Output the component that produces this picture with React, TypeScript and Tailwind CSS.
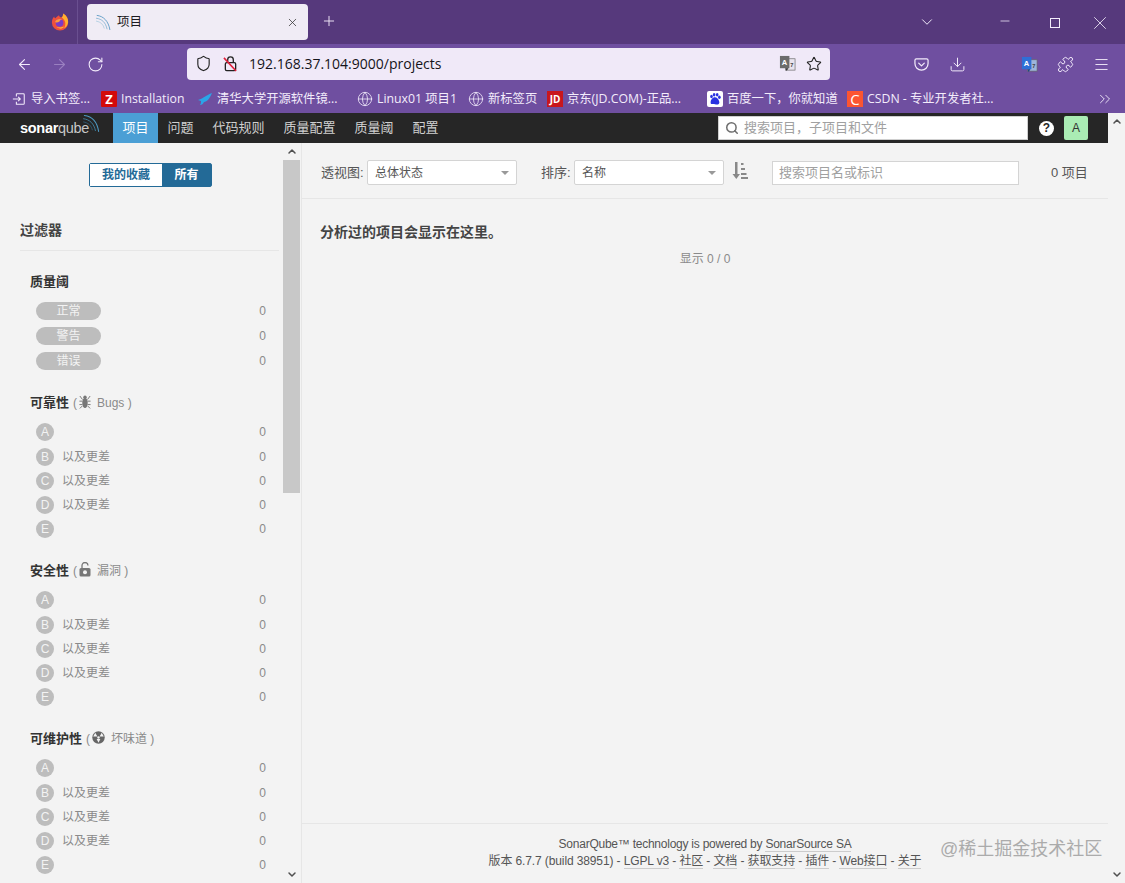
import React from "react";
import {
  ArrowLeft, ArrowRight, RotateCw, Shield, Star, Download, Puzzle, Menu, ChevronDown, ChevronUp,
  Minus, X, Plus, Globe, Search, ChevronsRight,
} from "lucide-react";

const FONT = "font-['Liberation_Sans','Noto_Sans_CJK_SC',sans-serif]";

function SonarWave({ className, colors }: { className: string; colors: string[] }) {
  return (
    <svg viewBox="0 0 24 24" className={className} fill="none" strokeLinecap="round">
      <path d="M3 2c9 1 16 8 18 20" stroke={colors[0]} strokeWidth="1.3" />
      <path d="M2 6c8 1 13 6 15 15" stroke={colors[1]} strokeWidth="1.2" />
      <path d="M2 10c6 1 10 5 11 10" stroke={colors[2]} strokeWidth="1.1" />
    </svg>
  );
}

function Firefox() {
  return (
    <svg viewBox="0 0 20 20" className="w-[18px] h-[19px]">
      <path d="M13.5 1c4 2.5 6 6 5.5 10a9 9 0 0 1-18 0c0-2.5 1-5 2.5-6.5 0 1 .5 1.5 1.5 2C6 4.5 8 4 9 3c0 1.500 1 2 2.500 2.500C13 5 13.500 3 13.500 1z" fill="#f0503c" />
      <path d="M13.500 1c4 2.500 6 6 5.500 10-.5 3-2 5-4.500 6.500 2-3 2-7 0-9.500-1-1.500-2-2-3-2.500C13 5 13.500 3 13.500 1z" fill="#ffb02e" />
      <circle cx="9.500" cy="11.500" r="4.300" fill="#7a3bc8" />
      <path d="M4.500 10.500c1-3 5-4.500 8-2.500-2 0-3 1-3 2-2 1.500-4 1.500-5 .5z" fill="#ff9a3d" />
      <path d="M6 16.500c3 2 7 1.500 9-1-1 .5-5 1.500-9 1z" fill="#ffc83d" />
    </svg>
  );
}

function LockOff() {
  return (
    <svg viewBox="0 0 16 18" className="w-[15px] h-[17px]" fill="none">
      <path d="M5 8V5a3 3 0 0 1 6 0v3" stroke="#222" strokeWidth="1.4" />
      <rect x="2.500" y="8" width="11" height="8.500" rx="1.500" stroke="#222" strokeWidth="1.400" />
      <path d="M1 3l13 14" stroke="#e0203c" strokeWidth="1.700" />
    </svg>
  );
}

function Translate({ blue }: { blue?: boolean }) {
  return (
    <svg viewBox="0 0 18 18" className="w-[17px] h-[17px]">
      <rect x="7" y="4" width="10" height="12" fill={blue ? "#9db5dc" : "#e8e3ee"} stroke="#666" strokeWidth="0.7" />
      <rect x="1" y="1" width="10" height="13" fill={blue ? "#2f6fd6" : "#6b6b6b"} />
      <path d="M7 14l1 3 2-3z" fill={blue ? "#1b3f80" : "#333"} />
      <text x="3" y="10.500" fontSize="8" fontWeight="700" fill="#fff" fontFamily="Liberation Sans">A</text>
      <text x="12" y="13" fontSize="6" fontWeight="700" fill="#444" fontFamily="Liberation Sans">7</text>
    </svg>
  );
}

function Pocket() {
  return (
    <svg viewBox="0 0 16 16" className="w-[15px] h-[15px]" fill="none" stroke="#f3ecfb" strokeWidth="1.300" strokeLinecap="round" strokeLinejoin="round">
      <path d="M2.500 2h11A1.500 1.500 0 0 1 15 3.500V7a7 7 0 0 1-14 0V3.500A1.500 1.500 0 0 1 2.500 2z" />
      <path d="M5 6.500l3 3 3-3" />
    </svg>
  );
}

function ImportIcon() {
  return (
    <svg viewBox="0 0 16 16" className="w-[14px] h-[14px]" fill="none" stroke="#f3ecfb" strokeWidth="1.200">
      <path d="M5 2h8a1 1 0 0 1 1 1v10a1 1 0 0 1-1 1H5V11" />
      <path d="M5 5V2" />
      <path d="M1 8h8M7 5.500L9.500 8 7 10.500" />
    </svg>
  );
}

function Bookmark({ icon, label, w }: { icon: React.ReactNode; label: string; w: string }) {
  return (
    <div className={`flex items-center gap-[4px] shrink-0 ${w}`}>
      <span className="w-[16px] h-[16px] flex items-center justify-center shrink-0">{icon}</span>
      <span className="pt-[2px] font-['Open_Sans','Noto_Sans_CJK_SC',sans-serif] text-[12.3px] text-[#f3ecfb] whitespace-nowrap">{label}</span>
    </div>
  );
}

function BrowserChrome() {
  return (
    <div className="shrink-0 font-['Open_Sans','Noto_Sans_CJK_SC',sans-serif]">
      <div className="h-[44px] bg-[#56397c] flex items-start">
        <div className="w-[78px] h-[44px] border-r border-[#6a4f90] flex items-center justify-end pr-[8px] pb-[2px]">
          <Firefox />
        </div>
        <div className="ml-[9px] mt-[4px] w-[221px] h-[36px] bg-[#f0ecf5] rounded-[4px] flex items-center pl-[8px] pr-[9px]">
          <SonarWave className="w-[17px] h-[17px]" colors={["#5f9cc5", "#86b4d2", "#a9cadf"]} />
          <span className="ml-[5px] text-[12.5px] text-[#1c1b22]">项目</span>
          <X className="ml-auto w-[13px] h-[13px] text-[#333]" strokeWidth={1.4} />
        </div>
        <Plus className="ml-[13px] mt-[13px] w-[16px] h-[16px] text-[#f3ecfb]" strokeWidth={1.4} />
        <ChevronDown className="ml-[581px] mt-[13px] w-[18px] h-[18px] text-[#f3ecfb]" strokeWidth={1.3} />
        <Minus className="ml-[62px] mt-[14px] w-[14px] h-[14px] text-[#f3ecfb]" strokeWidth={1.3} />
        <span className="ml-[38px] mt-[18px] w-[10px] h-[10px] border border-[#f3ecfb]" />
        <X className="ml-[29px] mt-[12px] w-[22px] h-[22px] text-[#f3ecfb]" strokeWidth={0.9} />
      </div>
      <div className="h-[40px] bg-[#6f4fa0] flex items-center">
        <ArrowLeft className="ml-[16px] w-[17px] h-[17px] text-[#f3ecfb]" strokeWidth={1.5} />
        <ArrowRight className="ml-[18px] w-[17px] h-[17px] text-[#9a80c0]" strokeWidth={1.5} />
        <RotateCw className="ml-[19px] w-[17px] h-[17px] text-[#f3ecfb]" strokeWidth={1.5} />
        <div className="ml-[83px] mt-[-1px] w-[643px] h-[32px] bg-[#f0e9f8] rounded-[4px] flex items-center pl-[8px] pr-[8px]">
          <Shield className="w-[17px] h-[17px] text-[#222]" strokeWidth={1.6} />
          <span className="ml-[11px]"><LockOff /></span>
          <span className="ml-[11px] text-[14px] text-[#15141a]">192.168.37.104:9000/projects</span>
          <span className="ml-auto"><Translate /></span>
          <Star className="ml-[10px] w-[16px] h-[16px] text-[#222]" strokeWidth={1.6} />
        </div>
        <span className="ml-[84px]"><Pocket /></span>
        <Download className="ml-[20px] w-[17px] h-[17px] text-[#f3ecfb]" strokeWidth={1.4} />
        <span className="ml-[55px]"><Translate blue /></span>
        <Puzzle className="ml-[19px] w-[17px] h-[17px] text-[#f3ecfb]" strokeWidth={1.4} />
        <Menu className="ml-[19px] w-[17px] h-[17px] text-[#f3ecfb]" strokeWidth={1.3} />
      </div>
      <div className="h-[29px] bg-[#6f4fa0] flex items-center pl-[11px]">
        <Bookmark w="w-[90px]" icon={<ImportIcon />} label="导入书签..." />
        <Bookmark w="w-[96px]" icon={<span className="w-[16px] h-[16px] bg-[#d30a0a] text-white text-[13px] font-bold leading-[16px] text-center rounded-[1px]">Z</span>} label="Installation" />
        <Bookmark w="w-[160px]" icon={<svg viewBox="0 0 16 16" className="w-[16px] h-[16px]"><path d="M1 9c4-1 7-4 14-7-2 5-5 9-8 9-1 2-2 3-4 3 1-1 1-3 1-4z" fill="#2aa5e8" /></svg>} label="清华大学开源软件镜..." />
        <Bookmark w="w-[111px]" icon={<Globe className="w-[16px] h-[16px] text-[#f3ecfb]" strokeWidth={1.2} />} label="Linux01 项目1" />
        <Bookmark w="w-[79px]" icon={<Globe className="w-[16px] h-[16px] text-[#f3ecfb]" strokeWidth={1.2} />} label="新标签页" />
        <Bookmark w="w-[160px]" icon={<span className="w-[16px] h-[16px] bg-[#c8161d] text-white text-[10px] font-bold leading-[16px] text-center">JD</span>} label="京东(JD.COM)-正品..." />
        <Bookmark w="w-[140px]" icon={<span className="w-[16px] h-[16px] bg-white rounded-[2px] flex items-center justify-center"><svg viewBox="0 0 16 16" className="w-[14px] h-[14px]" fill="#2932e1"><ellipse cx="4" cy="5" rx="1.500" ry="2" /><ellipse cx="7" cy="3" rx="1.500" ry="2" /><ellipse cx="10.500" cy="3" rx="1.500" ry="2" /><ellipse cx="13" cy="6" rx="1.500" ry="2" /><path d="M8 6c3 0 5 4 5 6s-2 3-5 2-5 1-5-2 2-6 5-6z" /></svg></span>} label="百度一下，你就知道" />
        <Bookmark w="w-[249px]" icon={<span className="w-[16px] h-[16px] bg-[#fc5531] text-white text-[15px] leading-[16px] text-center">C</span>} label="CSDN - 专业开发者社..." />
        <ChevronsRight className="w-[18px] h-[18px] text-[#f3ecfb]" strokeWidth={1.2} />
      </div>
    </div>
  );
}

function SonarNav() {
  const items = ["问题", "代码规则", "质量配置", "质量阈", "配置"];
  return (
    <div className="h-[30px] bg-[#262626] flex items-stretch shrink-0">
      <div className="w-[113px] flex items-center pl-[20px]">
        <span className="text-[14.5px] font-bold text-white tracking-[-0.3px] leading-none">sonar</span>
        <span className="text-[14.5px] text-[#c8c8c8] tracking-[-0.3px] leading-none">qube</span>
        <SonarWave className="w-[19px] h-[19px] -ml-[7px] -mt-[9px]" colors={["#4f9bc4", "#3f7f9f", "#2f5f78"]} />
      </div>
      <div className="w-[45px] bg-[#4b9fd5] text-white text-[13px] flex items-center justify-center">项目</div>
      {items.map((t) => (
        <div key={t} className="px-[9.5px] text-[#d0d0d0] text-[13px] flex items-center">{t}</div>
      ))}
      <div className="ml-auto flex items-center">
        <div className="w-[310px] h-[24px] bg-white border border-[#cfcfcf] flex items-center pl-[6px]">
          <Search className="w-[14px] h-[14px] text-[#6f6f6f]" strokeWidth={2.6} />
          <span className="ml-[5px] text-[13px] text-[#a0a0a0]">搜索项目，子项目和文件</span>
        </div>
        <span className="ml-[11px] w-[15px] h-[15px] bg-white rounded-full text-[#262626] text-[12px] font-bold leading-[15px] text-center">?</span>
        <span className="ml-[10px] mr-[20px] w-[24px] h-[24px] bg-[#aaecb4] rounded-[2px] text-[#333] text-[12px] leading-[24px] text-center">A</span>
      </div>
    </div>
  );
}

function Grade({ g }: { g: string }) {
  return (
    <span className="w-[18px] h-[18px] rounded-full bg-[#bdbdbd] text-[#f3f3f3] text-[12px] leading-[18px] text-center shrink-0">{g}</span>
  );
}

function Count() {
  return <span className="ml-auto text-[12px] text-[#8a8a8a]">0</span>;
}

function Ratings() {
  const rows = [
    ["A", false, "h-[26px]"],
    ["B", true, "h-[24px]"],
    ["C", true, "h-[24px]"],
    ["D", true, "h-[24px]"],
    ["E", false, "h-[24px]"],
  ] as const;
  return (
    <div>
      {rows.map(([g, more, h]) => (
        <div key={g} className={`${h} flex items-center pl-[36px] pr-[17px]`}>
          <Grade g={g} />
          {more && <span className="ml-[8px] text-[12px] text-[#8a8a8a]">以及更差</span>}
          <Count />
        </div>
      ))}
    </div>
  );
}

function FacetTitle({ title, icon, label }: { title: string; icon: React.ReactNode; label: string }) {
  return (
    <div className="h-[24px] flex items-center pl-[30px] mt-[18px] mb-[4px]">
      <span className="text-[13px] font-bold text-[#333]">{title}</span>
      <span className="ml-[4px] text-[12px] text-[#8a8a8a]">(</span>
      <span className="ml-[2px] flex items-center -mt-[3px]">{icon}</span>
      <span className="ml-[6px] text-[12px] text-[#8a8a8a]">{label} )</span>
    </div>
  );
}

function Scrollbar({ thumb }: { thumb?: boolean }) {
  return (
    <div className="w-[17px] bg-[#f3f3f3] flex flex-col items-center shrink-0">
      <ChevronUp className="h-[17px] w-[12px] text-[#505050]" strokeWidth={3} />
      {thumb ? <div className="w-full h-[333px] bg-[#c8c8c8]" /> : null}
      <ChevronDown className="mt-auto h-[17px] w-[12px] text-[#505050]" strokeWidth={3} />
    </div>
  );
}

function Sidebar() {
  return (
    <div className="w-[302px] shrink-0 flex border-r border-[#e6e6e6] overflow-hidden">
      <div className="w-[283px] shrink-0 overflow-hidden">
        <div className="flex pt-[20px] pl-[89px]">
          <div className="flex h-[24px] rounded-[2px] border border-[#236a97] text-[12px] font-bold">
            <span className="w-[72px] bg-white text-[#236a97] flex items-center justify-center">我的收藏</span>
            <span className="w-[49px] bg-[#236a97] text-white flex items-center justify-center">所有</span>
          </div>
        </div>
        <div className="ml-[20px] mr-[4px] mt-[30px] h-[34px] border-b border-[#e6e6e6] text-[14px] font-bold text-[#444] leading-[26px]">过滤器</div>
        <div className="h-[22px] mt-[20px] pl-[30px] flex items-center text-[13px] font-bold text-[#333]">质量阈</div>
        <div className="mt-[5px]">
          {["正常", "警告", "错误"].map((t) => (
            <div key={t} className="h-[25px] flex items-center pl-[36px] pr-[17px]">
              <span className="w-[65px] h-[18px] rounded-full bg-[#bdbdbd] text-[#f3f3f3] text-[12px] leading-[18px] text-center">{t}</span>
              <Count />
            </div>
          ))}
        </div>
        <FacetTitle
          title="可靠性"
          label="Bugs"
          icon={
            <svg viewBox="0 0 14 16" className="w-[12px] h-[14px]" fill="#777" stroke="#777" strokeWidth="1.100">
              <ellipse cx="7" cy="9" rx="3.200" ry="6" stroke="none" />
              <circle cx="7" cy="2.500" r="2" stroke="none" />
              <path d="M1 1l3 4M13 1l-3 4M0.500 7h3.500M13.500 7h-3.500M0.500 11h3.500M13.500 11h-3.500M1 15.500l3-3M13 15.500l-3-3" fill="none" />
            </svg>
          }
        />
        <Ratings />
        <FacetTitle
          title="安全性"
          label="漏洞"
          icon={
            <svg viewBox="0 0 12 15" className="w-[12px] h-[15px]" fill="none">
              <path d="M3 6V3.500a3 3 0 0 1 6 0" stroke="#777" strokeWidth="1.300" />
              <rect x="0.500" y="6" width="11" height="8.500" rx="1.500" fill="#777" />
              <circle cx="6" cy="10.200" r="2" fill="#f3f3f3" />
            </svg>
          }
        />
        <Ratings />
        <FacetTitle
          title="可维护性"
          label="坏味道"
          icon={
            <svg viewBox="0 0 14 14" className="w-[13px] h-[13px]">
              <circle cx="7" cy="7" r="6.700" fill="#666" />
              <circle cx="7" cy="7" r="1.300" fill="#f3f3f3" />
              <path d="M3.500 1.900L5.800 5.800 1.300 5.800zM10.500 1.900L8.200 5.800 12.700 5.800zM7 12.700L5 8.700h4z" fill="#f3f3f3" />
            </svg>
          }
        />
        <Ratings />
      </div>
      <Scrollbar thumb />
    </div>
  );
}

function Select({ label }: { label: string }) {
  return (
    <div className="w-[150px] h-[25px] bg-white border border-[#d4d4d4] rounded-[2px] flex items-center pl-[7px] pr-[7px] text-[12px] text-[#555]">
      {label}
      <span className="ml-auto w-0 h-0 border-x-[4px] border-x-transparent border-t-[4px] border-t-[#999]" />
    </div>
  );
}

function Main() {
  return (
    <div className="flex-1 min-w-0 flex flex-col">
      <div className="h-[56px] border-b border-[#e6e6e6] flex items-center pl-[19px] pt-[4px] text-[13px] text-[#555]">
        <span className="w-[46px]">透视图:</span>
        <Select label="总体状态" />
        <span className="ml-[24px] w-[33px]">排序:</span>
        <Select label="名称" />
        <svg viewBox="0 0 16 18" className="ml-[8px] w-[16px] h-[18px] mb-[3px]" fill="#888">
          <path d="M3 0h2.500v12h2.500l-3.700 5-3.800-5h2.500z" />
          <path d="M9 1h2.500v2H9zM9 6h4v2H9zM9 11h5.500v2H9zM9 15h7v2H9z" />
        </svg>
        <div className="ml-[24px] w-[247px] h-[24px] bg-white border border-[#d4d4d4] flex items-center pl-[6px] text-[13px] text-[#a0a0a0]">搜索项目名或标识</div>
        <span className="ml-[32px] text-[13px] text-[#555]">0 项目</span>
      </div>
      <div className="pl-[18px] mt-[23px] text-[14px] font-bold text-[#444] leading-[20px]">分析过的项目会显示在这里。</div>
      <div className="mt-[7px] text-center text-[12px] text-[#8a8a8a] leading-[20px]">显示 0 / 0</div>
      <div className="mt-auto h-[60px] border-t border-[#e6e6e6] pt-[12px] text-center text-[12px] text-[#555] leading-[17px]">
        <div className="tracking-[-0.24px]">SonarQube™ technology is powered by <span className="border-b border-[#ccc]">SonarSource SA</span></div>
        <div className="tracking-[-0.12px]">
          版本 6.7.7 (build 38951) - <span className="border-b border-[#ccc]">LGPL v3</span> - <span className="border-b border-[#ccc]">社区</span> - <span className="border-b border-[#ccc]">文档</span> - <span className="border-b border-[#ccc]">获取支持</span> - <span className="border-b border-[#ccc]">插件</span> - <span className="border-b border-[#ccc]">Web接口</span> - <span className="border-b border-[#ccc]">关于</span>
        </div>
      </div>
    </div>
  );
}

export default function App() {
  return (
    <div className={`${FONT} relative w-[1125px] h-[883px] overflow-hidden flex flex-col bg-[#f3f3f3]`}>
      <BrowserChrome />
      <div className="flex-1 min-h-0 flex">
        <div className="flex-1 min-w-0 flex flex-col">
          <SonarNav />
          <div className="flex-1 min-h-0 flex">
            <Sidebar />
            <Main />
          </div>
        </div>
        <Scrollbar />
      </div>
      <div className="absolute left-[940px] top-[836px] text-[18px] text-[#9a9a9a] opacity-80 whitespace-nowrap">@稀土掘金技术社区</div>
    </div>
  );
}
